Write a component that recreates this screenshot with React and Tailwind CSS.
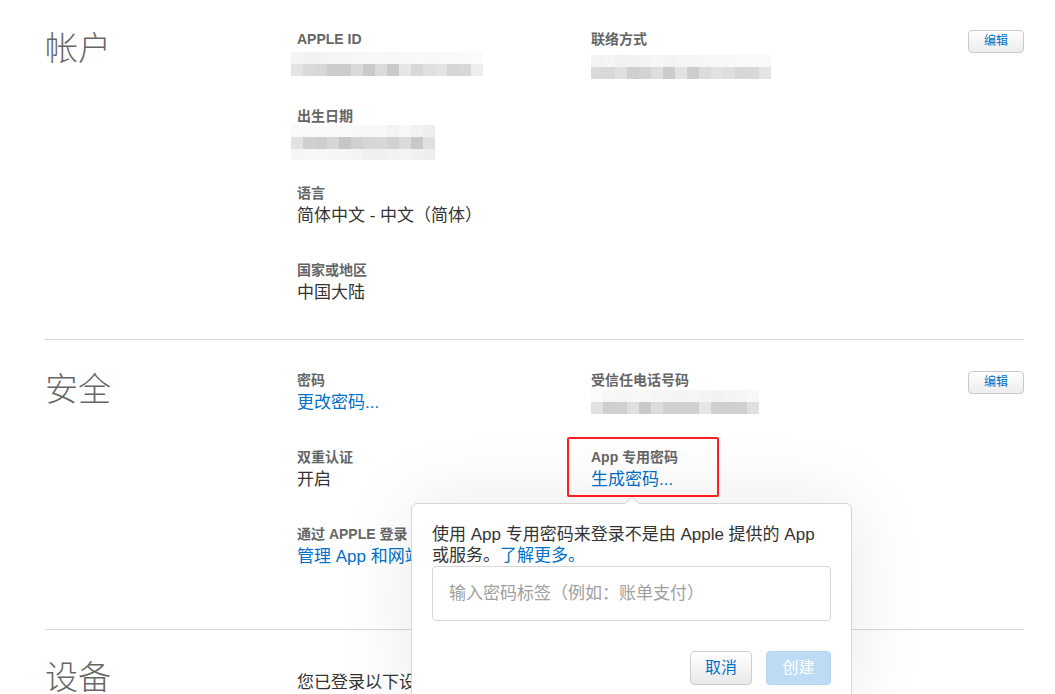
import React from "react";

const FONT = { fontFamily: '"Liberation Sans", "Noto Sans CJK SC", sans-serif' };

function Pix({ dark, light, lightBelow }) {
  return (
    <div className="flex flex-col">
      {light && (
        <div className="flex">
          {light.map((c, i) => (
            <div key={i} className="w-[12px] h-[12px]" style={{ backgroundColor: c }} />
          ))}
        </div>
      )}
      <div className="flex">
        {dark.map((c, i) => (
          <div key={i} className="w-[12px] h-[12px]" style={{ backgroundColor: c }} />
        ))}
      </div>
      {lightBelow && (
        <div className="flex">
          {lightBelow.map((c, i) => (
            <div key={i} className="w-[12px] h-[11px]" style={{ backgroundColor: c }} />
          ))}
        </div>
      )}
    </div>
  );
}

function Label({ children }) {
  return <div className="text-[14px] leading-[18px] font-semibold text-[#666]">{children}</div>;
}

function Value({ children, blue }) {
  return (
    <div className={"text-[17px] leading-[24px] mt-[2px] " + (blue ? "text-[#0070c9]" : "text-[#333]")}>
      {children}
    </div>
  );
}

function Item({ label, children, last }) {
  return (
    <div className={last ? "" : "mb-[33px]"}>
      <Label>{label}</Label>
      {children}
    </div>
  );
}

function EditButton() {
  return (
    <button className="w-[56px] h-[23px] rounded-[4px] border border-[#c9c9c9] bg-gradient-to-b from-white to-[#ececec] text-[12px] leading-[21px] text-[#0070c9]">
      编辑
    </button>
  );
}

export default function App() {
  return (
    <div className="bg-white min-h-[694px] overflow-hidden" style={FONT}>
      <div className="ml-[45px] w-[979px]">
        {/* 帐户 */}
        <section className="flex border-b border-[#d6d6d6] pt-[30px] pb-[34px]">
          <h2 className="w-[252px] text-[33px] leading-[33px] pt-[2px] font-light text-[#666]">帐户</h2>
          <div className="w-[294px]">
            <Item label="APPLE ID">
              <div className="h-[26px] -ml-[6px] pt-[4px]">
                <Pix
                  light={["#f4f4f4","#f2f2f2","#f3f3f3","#f5f5f5","#f6f6f6","#f7f7f7","#f8f8f8","#f8f8f8","#f7f7f7","#f8f8f8","#f9f9f9","#f8f8f8","#f9f9f9","#f9f9f9","#fafafa","#fbfbfb"]}
                  dark={["#e4e4e4","#dadada","#d7d7d7","#cccccc","#cdcdcd","#dadada","#cacaca","#dbdbdb","#cacaca","#e6e6e6","#d8d8d8","#e0e0e0","#e4e4e4","#d6d6d6","#d8d8d8","#eeeeee"]}
                />
              </div>
            </Item>
            <Item label="出生日期">
              <div className="h-[26px] -ml-[6px]">
                <Pix
                  light={["#fafafa","#fafafa","#fafafa","#fafafa","#f9f9f9","#f8f8f8","#f7f7f7","#f8f8f8","#f3f3f3","#f7f7f7","#f2f2f2","#eeeeee"]}
                  dark={["#e2e2e2","#d0d0d0","#cdcdcd","#d6d6d6","#c6c6c6","#d0d0d0","#d6d6d6","#d8d8d8","#d2d2d2","#dadada","#c9c9c9","#e0e0e0"]}
                  lightBelow={["#f6f6f6","#f7f7f7","#f7f7f7","#f6f6f6","#f5f5f5","#f4f4f4","#efefef","#f0f0f0","#f2f2f2","#f3f3f3","#f1f1f1","#eeeeee"]}
                />
              </div>
            </Item>
            <Item label="语言">
              <Value>简体中文 - 中文（简体）</Value>
            </Item>
            <Item label="国家或地区" last>
              <Value>中国大陆</Value>
            </Item>
          </div>
          <div className="flex-1">
            <Item label="联络方式" last>
              <div className="h-[26px] pt-[7px]">
                <Pix
                  light={["#f3f3f3","#f5f5f5","#f1f1f1","#f2f2f2","#f4f4f4","#f6f6f6","#f3f3f3","#f5f5f5","#f6f6f6","#f7f7f7","#f8f8f8","#f8f8f8","#f9f9f9","#f9f9f9","#f9f9f9"]}
                  dark={["#dadada","#d8d8d8","#e0e0e0","#cfcfcf","#d3d3d3","#dedede","#cccccc","#e2e2e2","#cdcdcd","#dcdcdc","#e2e2e2","#dedede","#d6d6d6","#d8d8d8","#e4e4e4"]}
                />
              </div>
            </Item>
          </div>
          <EditButton />
        </section>

        {/* 安全 */}
        <section className="flex border-b border-[#d6d6d6] pt-[31px] pb-[60px]">
          <h2 className="w-[252px] text-[33px] leading-[33px] pt-[2px] font-light text-[#666]">安全</h2>
          <div className="w-[294px]">
            <Item label="密码">
              <Value blue>更改密码...</Value>
            </Item>
            <Item label="双重认证">
              <Value>开启</Value>
            </Item>
            <Item label="通过 APPLE 登录" last>
              <Value blue>管理 App 和网站...</Value>
            </Item>
          </div>
          <div className="flex-1">
            <Item label="受信任电话号码">
              <div className="h-[26px] pt-[1px]">
                <Pix
                  light={["#fbfbfb","#f7f7f7","#f6f6f6","#f7f7f7","#f8f8f8","#f6f6f6","#f5f5f5","#f4f4f4","#f6f6f6","#f4f4f4","#f2f2f2","#f4f4f4","#f6f6f6","#f8f8f8"]}
                  dark={["#e2e2e2","#cfcfcf","#d0d0d0","#e0e0e0","#c9c9c9","#dcdcdc","#d1d1d1","#d1d1d1","#d1d1d1","#e6e6e6","#cfcfcf","#d0d0d0","#d0d0d0","#e0e0e0"]}
                />
              </div>
            </Item>
            <div className="relative">
              <div className="absolute -left-[24px] -top-[11px] w-[152px] h-[60px] border-2 border-[#ff1f1f] rounded-[2px] z-20" />
              <Label>App 专用密码</Label>
              <Value blue>生成密码...</Value>
              {/* popover */}
              <div className="absolute left-[-180px] top-[55px] w-[441px] z-10 bg-white border border-[#d6d6d6] rounded-[6px] shadow-[0_0_80px_rgba(0,0,0,0.09)] px-[20px] pt-[20px] pb-[20px]">
                <div className="absolute left-1/2 -top-[6px] -ml-[5px] w-[10px] h-[10px] bg-white border-l border-t border-[#d6d6d6] rotate-45" />
                <p className="text-[17px] leading-[21px] text-[#333] whitespace-nowrap">
                  使用 App 专用密码来登录不是由 Apple 提供的 App
                  <br />
                  或服务。<span className="text-[#0070c9]">了解更多。</span>
                </p>
                <div className="h-[55px] border border-[#d6d6d6] rounded-[4px] flex items-center px-[16px] text-[17px] text-[#a0a0a0]">
                  输入密码标签（例如：账单支付）
                </div>
                <div className="flex justify-end gap-[14px] mt-[30px]">
                  <button className="w-[62px] h-[34px] rounded-[4px] border border-[#cfcfcf] bg-gradient-to-b from-white to-[#e9e9e9] text-[16px] text-[#0070c9]">
                    取消
                  </button>
                  <button className="w-[65px] h-[34px] rounded-[4px] border border-[#b3d5f1] bg-[#bcdcf5] text-[16px] text-white">
                    创建
                  </button>
                </div>
              </div>
            </div>
          </div>
          <EditButton />
        </section>

        {/* 设备 */}
        <section className="flex pt-[29px] pb-[40px]">
          <h2 className="w-[252px] text-[33px] leading-[33px] pt-[2px] font-light text-[#666]">设备</h2>
          <div className="flex-1 pt-[10px]">
            <Value>您已登录以下设备。</Value>
          </div>
        </section>
      </div>
    </div>
  );
}
